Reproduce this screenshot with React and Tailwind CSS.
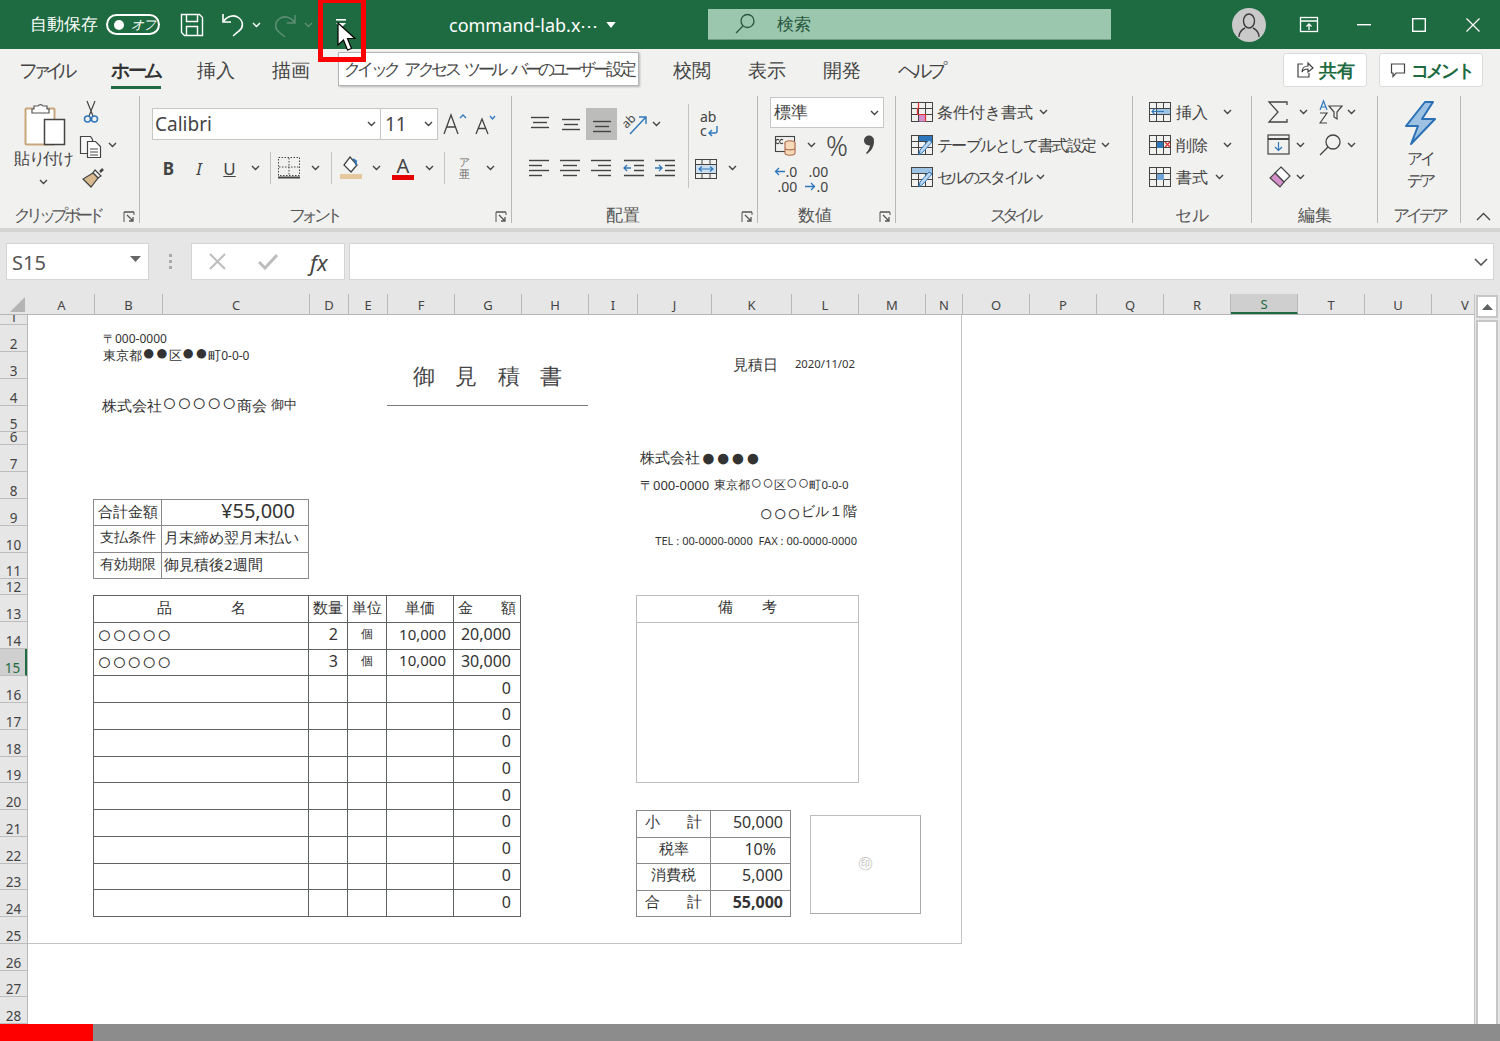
import React from "react";

const Chev = ({ c = "#444", w = 9 }) => (
  <svg width={w} height="6" viewBox="0 0 9 6" fill="none" stroke={c} strokeWidth="1.4"><path d="M1 1l3.5 3.5L8 1" /></svg>
);
const Launcher = () => (
  <svg width="12" height="12" viewBox="0 0 12 12" fill="none" stroke="#555" strokeWidth="1"><path d="M1 11V1h10v3M1 1h10" /><path d="M4 4l6 6M10 6v4H6" strokeWidth="1.3" /></svg>
);
const Lines = ({ rows }) => (
  <svg width="22" height="20" viewBox="0 0 22 20" stroke="#444" strokeWidth="1.4">
    {rows.map((r, i) => <path key={i} d={`M${r[1]} ${r[0]}.5H${r[2]}`} />)}
  </svg>
);
const CellIcon = ({ children }) => (
  <svg width="24" height="24" viewBox="0 0 24 24" fill="none">
    {children}
  </svg>
);
const GridLines = () => (
  <g stroke="#444" strokeWidth="1" fill="none">
    <rect x="1.5" y="2.5" width="21" height="19" />
    <path d="M1.5 8.5h21M1.5 14.5h21M8.5 2.5v19M15.5 2.5v19" />
  </g>
);
const ArrowL = () => (
  <svg className="mr-px" width="11" height="9" viewBox="0 0 11 9" fill="none" stroke="#2f77bc" strokeWidth="1.300"><path d="M11 4.500H1M5 1L1.500 4.500 5 8" /></svg>
);
const ArrowR = () => (
  <svg className="mr-px" width="11" height="9" viewBox="0 0 11 9" fill="none" stroke="#2f77bc" strokeWidth="1.300"><path d="M0 4.500h10M6 1l3.500 3.500L6 8" /></svg>
);

function Group({ w, label, track = "", launcher, children }) {
  return (
    <div className={`${w} h-[127px] shrink-0 flex flex-col relative border-r border-[#b9b9b7]`}>
      <div className="h-[108px]">{children}</div>
      <div className={`h-[19px] pt-[3px] flex items-center justify-center text-[16.5px] leading-none text-[#555] whitespace-nowrap ${launcher ? "pr-[24px]" : ""} ${track}`}>{label}</div>
      {launcher && <div className="absolute right-[4px] bottom-[0px] flex"><Launcher /></div>}
    </div>
  );
}

const columns = [
  ["A", "w-[66px]"], ["B", "w-[68px]"], ["C", "w-[147px]"], ["D", "w-[39px]"], ["E", "w-[39px]"], ["F", "w-[67px]"], ["G", "w-[67px]"], ["H", "w-[67px]"],
  ["I", "w-[49px]"], ["J", "w-[74px]"], ["K", "w-[80px]"], ["L", "w-[67px]"], ["M", "w-[67px]"], ["N", "w-[37px]"], ["O", "w-[67px]"], ["P", "w-[67px]"],
  ["Q", "w-[67px]"], ["R", "w-[67px]"], ["S", "w-[67px]"], ["T", "w-[67px]"], ["U", "w-[67px]"], ["V", "w-[67px]"],
];
const r27 = "h-[26.78px]";
const rowHeights = [
  "h-[10px]", "h-[27px]", "h-[26.5px]", "h-[27px]", "h-[26.5px]", "h-[13px]", "h-[27px]", "h-[27px]", "h-[26.5px]", "h-[27px]", "h-[26.5px]", "h-[16px]",
  "h-[27px]", "h-[27px]", "h-[27px]", "h-[27px]", r27, r27, r27, r27, r27, r27, r27, r27, r27, r27, r27, r27,
];

const Marks = ({ children, className = "" }) => (
  <span className={`font-['DejaVu_Sans',sans-serif] leading-[0] ${className}`}>{children}</span>
);

const itemRows = [
  ["○○○○○", "2", "個", "10,000", "20,000"],
  ["○○○○○", "3", "個", "10,000", "30,000"],
  ...Array.from({ length: 9 }, () => ["", "", "", "", "0"]),
];

const LC = "border-r border-b border-[#8a8a8a] flex items-center pb-[3px]";
const DC = "border-r border-b border-[#5f6360] flex items-center pb-[3px]";

export default function App() {
  return (
    <div lang="ja" className="w-[1500px] h-[1041px] relative overflow-hidden flex flex-col bg-[#e6e6e6] text-[#444] font-['Noto_Sans_CJK_JP',sans-serif]">
      {/* Title bar */}
      <div className="h-[49px] shrink-0 bg-[#1e6b41] flex items-center text-white">
        <span className="ml-[30px] w-[66px] text-[16.5px] leading-none whitespace-nowrap">自動保存</span>
        <div className="ml-[10px] w-[54px] h-[21px] rounded-full border-2 border-white flex items-center">
          <span className="ml-[6px] w-[10px] h-[10px] rounded-full bg-white" />
          <span className="ml-[7px] text-[13px] leading-none italic tracking-[-1px]">オフ</span>
        </div>
        <svg className="ml-[20px]" width="24" height="24" viewBox="0 0 24 24" fill="none" stroke="#fff" strokeWidth="1.4">
          <path d="M1.5 1.5h18l3 3v18h-18l-3-3z" /><path d="M6.5 1.5v7h11v-7M6.5 22.5v-9h11v9" />
        </svg>
        <svg className="ml-[17px]" width="24" height="26" viewBox="0 0 24 26" fill="none" stroke="#fff" strokeWidth="1.6">
          <path d="M2 2v8h8" /><path d="M2.5 9.5C6 4 13 2 18 6c5 4 4 10 0 13l-6 5" />
        </svg>
        <span className="ml-[7px] flex"><Chev c="#fff" /></span>
        <svg className="ml-[12px]" width="24" height="24" viewBox="0 0 24 24" fill="none" stroke="#5d8f74" strokeWidth="1.5">
          <path d="M22 2v8h-8" /><path d="M21.5 9.5C18 4 11 2 6 6 1 10 2 16 6 19l6 5" />
        </svg>
        <span className="ml-[7px] flex"><Chev c="#5d8f74" /></span>
        <svg className="ml-[22px] -mt-[2px]" width="12" height="9" viewBox="0 0 12 9" fill="#fff"><rect x="1" y="0" width="10" height="1.6" /><path d="M1 4h10L6 9z" /></svg>
        <span className="ml-[102px] w-[147px] text-[18px] leading-none whitespace-nowrap font-['Noto_Sans',sans-serif]">command-lab.x⋯</span>
        <svg className="ml-[10px]" width="10" height="6" viewBox="0 0 11 7" fill="#fff"><path d="M0 0h11L5.500 7z" /></svg>
        <div className="ml-[92px] w-[403px] h-[31px] bg-[#9ac7ae] border-b border-[#6f9d84] flex items-center text-[#28563d]">
          <svg className="ml-[26px]" width="22" height="22" viewBox="0 0 22 22" fill="none" stroke="#28563d" strokeWidth="1.3"><circle cx="13.5" cy="8" r="6.5" /><path d="M9 13l-7 7" /></svg>
          <span className="ml-[21px] text-[16.5px] leading-none">検索</span>
        </div>
        <div className="ml-[121px] w-[34px] h-[34px] rounded-full bg-[#c9c9c9] flex items-center justify-center">
          <svg width="24" height="26" viewBox="0 0 24 26" fill="none" stroke="#3c3c3c" strokeWidth="1.4"><ellipse cx="12" cy="9" rx="5.5" ry="7" /><path d="M2 25c0-6 4-8 6-9M22 25c0-6-4-8-6-9" /></svg>
        </div>
        <svg className="ml-[33px]" width="20" height="18" viewBox="0 0 20 18" fill="none" stroke="#fff" strokeWidth="1.3"><rect x="1.5" y="1.5" width="17" height="14" /><path d="M1.5 5h17M10 14V8M7.5 10.5L10 8l2.5 2.5" /></svg>
        <svg className="ml-[38px]" width="14" height="2" viewBox="0 0 14 2" fill="#fff"><rect width="14" height="1.4" /></svg>
        <svg className="ml-[41px]" width="14" height="14" viewBox="0 0 14 14" fill="none" stroke="#fff" strokeWidth="1.4"><rect x="0.7" y="0.7" width="12.6" height="12.6" /></svg>
        <svg className="ml-[40px]" width="14" height="14" viewBox="0 0 14 14" fill="none" stroke="#fff" strokeWidth="1.3"><path d="M0.5 0.5l13 13M13.5 0.5l-13 13" /></svg>
      </div>

      {/* Tabs */}
      <div className="h-[47px] shrink-0 bg-[#f1f1ef] flex items-start text-[18.5px] leading-none text-[#444]">
        <span className="ml-[19px] mt-[12px] w-[54px] whitespace-nowrap tracking-[-6px]">ファイル</span>
        <div className="ml-[38px] w-[50px] h-[40px] flex flex-col items-center pt-[12px] border-b-[3px] border-[#1e6b41] font-bold text-[#333]"><span className="whitespace-nowrap tracking-[-2.5px]">ホーム</span></div>
        <span className="ml-[36px] mt-[12px] w-[38px] whitespace-nowrap">挿入</span>
        <span className="ml-[37px] mt-[12px] w-[38px] whitespace-nowrap">描画</span>
        <span className="ml-[363px] mt-[12px] w-[38px] whitespace-nowrap">校閲</span>
        <span className="ml-[37px] mt-[12px] w-[38px] whitespace-nowrap">表示</span>
        <span className="ml-[37px] mt-[12px] w-[39px] whitespace-nowrap">開発</span>
        <span className="ml-[36px] mt-[12px] w-[47px] whitespace-nowrap tracking-[-4px]">ヘルプ</span>
        <div className="ml-[338px] mt-[4px] w-[84px] h-[34px] bg-white border border-[#dcdcdc] rounded-[3px] flex items-center justify-center gap-[5px] font-bold text-[#1e6b41] text-[18px]">
          <svg width="18" height="18" viewBox="0 0 18 18" fill="none" stroke="#444" strokeWidth="1.2"><path d="M7 3H2v13h11v-4M6 11c0-4 3-6 6-6V2l5 5-5 4V8c-3 0-5 1-6 3z" /></svg>
          共有
        </div>
        <div className="ml-[12px] mt-[4px] w-[104px] h-[34px] bg-white border border-[#dcdcdc] rounded-[3px] flex items-center justify-center gap-[5px] font-bold text-[#1e6b41] text-[18px] tracking-[-2.7px]">
          <svg width="16" height="16" viewBox="0 0 16 16" fill="none" stroke="#444" strokeWidth="1.2"><path d="M1.5 2h13v9H6l-3 3.500V11H1.500z" /></svg>
          コメント
        </div>
      </div>

      {/* Ribbon */}
      <div className="h-[136px] shrink-0 bg-[#f1f1ef] flex items-start border-b-[4px] border-[#d4d4d2]">
        <Group w="w-[140px]" label="クリップボード" track="tracking-[-4.6px]" launcher>
          <div className="flex h-full">
            <div className="w-[86px] flex flex-col items-center">
              <svg className="mt-[6px] ml-[4px]" width="42" height="44" viewBox="0 0 42 44" fill="none">
                <rect x="1.500" y="6.500" width="29" height="36" rx="1" fill="#fff" stroke="#c8a77f" strokeWidth="2" />
                <path d="M10 7V4h4a3 3 0 0 1 5 0h4v3h2v4H8V7z" fill="#fff" stroke="#555" strokeWidth="1.2" />
                <rect x="20.500" y="17.500" width="20" height="25" fill="#fff" stroke="#444" strokeWidth="1.500" />
              </svg>
              <span className="mt-[2px] text-[16px] leading-[20px] whitespace-nowrap tracking-[-1.5px]">貼り付け</span>
              <span className="mt-[11px] flex"><Chev /></span>
            </div>
            <div className="flex flex-col">
              <div className="h-[32.500px] flex items-center">
                <svg className="ml-[-3px]" width="16" height="24" viewBox="0 0 16 24" fill="none" stroke="#444" strokeWidth="1.200"><path d="M4 1l6 15M12 1L6 16" /><circle cx="4.500" cy="19" r="3" stroke="#2f77bc" strokeWidth="1.500" /><circle cx="11.500" cy="19" r="3" stroke="#2f77bc" strokeWidth="1.500" /></svg>
              </div>
              <div className="h-[32.500px] flex items-center">
                <svg className="ml-[-7px] mt-[4px]" width="24" height="24" viewBox="0 0 24 24" fill="#f8f8f8" stroke="#444" strokeWidth="1.200"><path d="M1.500 1.500h10l2 3v14h-12z" /><path d="M8.500 6.500h8l5 5v11h-13z" fill="#fff" /><path d="M11 14h8M11 17h8M11 20h8" strokeWidth="1" /></svg>
                <span className="ml-[5px] flex"><Chev /></span>
              </div>
              <div className="h-[32.500px] flex items-center">
                <svg className="ml-[-5px] mt-[2px]" width="24" height="24" viewBox="0 0 24 24" fill="none" stroke="#444" strokeWidth="1.200"><path d="M14 4l6 6-3 2-5-5z" /><path d="M12 7l5 5-7 9-8-8z" fill="#d9b98e" /><path d="M19 6l3-3" strokeWidth="2.500" /></svg>
              </div>
            </div>
          </div>
        </Group>

        <Group w="w-[372px]" label="フォント" track="tracking-[-4.5px]" launcher>
          <div className="pt-[12px]">
            <div className="flex items-center h-[32px] pl-[12px]">
              <div className="w-[229px] h-[32px] bg-white border border-[#c6c6c6] flex items-center justify-between pr-[4px]">
                <span className="pl-[2px] text-[19px] leading-none font-['Noto_Sans',sans-serif]">Calibri</span>
                <Chev />
              </div>
              <div className="w-[57px] h-[32px] bg-white border border-l-0 border-[#c6c6c6] flex items-center justify-between pr-[4px]">
                <span className="pl-[4px] text-[19px] leading-none font-['Noto_Sans',sans-serif]">11</span>
                <Chev />
              </div>
              <svg className="ml-[5px]" width="24" height="24" viewBox="0 0 24 24" fill="none" stroke="#444" strokeWidth="1.300"><path d="M1 22L8 3l7 19M3.500 15h9" /><path d="M17 6l3-3 3 3" stroke="#2f77bc" /></svg>
              <svg className="ml-[8px]" width="22" height="22" viewBox="0 0 22 22" fill="none" stroke="#444" strokeWidth="1.300"><path d="M1 21L7 6l6 15M3 15.500h8" /><path d="M15 3l2.500 3L20 3" stroke="#2f77bc" /></svg>
            </div>
            <div className="flex items-center h-[32px] mt-[12px] pl-[13px]">
              <span className="w-[31px] text-center text-[17px] leading-none font-bold font-['Liberation_Sans',sans-serif]">B</span>
              <span className="w-[30px] text-center text-[17px] leading-none italic font-['Liberation_Sans',sans-serif]">I</span>
              <span className="w-[31px] text-center text-[17px] leading-none underline font-['Liberation_Sans',sans-serif]">U</span>
              <span className="w-[20px] flex justify-center"><Chev /></span>
              <span className="ml-[5px] w-px h-[32px] bg-[#c4c4c2]" />
              <span className="ml-[2px] w-[32px] flex justify-center">
                <svg width="22" height="22" viewBox="0 0 22 22" fill="none" stroke="#444" strokeWidth="1" strokeDasharray="1.500 1.500"><rect x="0.500" y="0.500" width="21" height="18" /><path d="M11 1v18M1 10h20" /><path d="M0 20.500h22" strokeWidth="2" strokeDasharray="none" /></svg>
              </span>
              <span className="w-[20px] flex justify-center"><Chev /></span>
              <span className="ml-[6px] w-px h-[32px] bg-[#c4c4c2]" />
              <span className="ml-[3px] w-[32px] flex justify-center">
                <svg width="24" height="24" viewBox="0 0 24 24" fill="none" stroke="#444" strokeWidth="1.300"><path d="M11 1l7 8-6 7-7-7z" fill="#fff" /><path d="M14 3l3 2 0 4" stroke="#2f77bc" strokeWidth="1.800" /><rect x="1" y="18" width="22" height="5" fill="#e5c89c" stroke="none" /></svg>
              </span>
              <span className="w-[19px] flex justify-center"><Chev /></span>
              <span className="ml-px w-[32px] flex flex-col items-center">
                <span className="text-[20px] leading-[19px] font-['Liberation_Sans',sans-serif]">A</span>
                <span className="w-[22px] h-[5px] bg-[#e60000]" />
              </span>
              <span className="w-[20px] flex justify-center"><Chev /></span>
              <span className="ml-[5px] w-px h-[32px] bg-[#c4c4c2]" />
              <span className="ml-[3px] w-[32px] flex flex-col items-center text-[11px] leading-[12px] text-[#666]"><span>ア</span><span>亜</span></span>
              <span className="w-[20px] flex justify-center"><Chev /></span>
            </div>
          </div>
        </Group>

        <Group w="w-[246px]" label="配置" launcher>
          <div className="flex pt-[12px] pl-[12px]">
            <div className="w-[156px]">
              <div className="flex items-center h-[32px]">
                <span className="w-[31px] flex justify-center"><Lines rows={[[3, 2, 20], [8, 4, 18], [13, 2, 20]]} /></span>
                <span className="w-[31px] flex justify-center"><Lines rows={[[5, 2, 20], [10, 4, 18], [15, 2, 20]]} /></span>
                <span className="w-[31px] h-[32px] bg-[#bcbcba] flex items-center justify-center"><Lines rows={[[7, 2, 20], [12, 4, 18], [17, 2, 20]]} /></span>
                <span className="ml-[2px] w-[32px] flex justify-center">
                  <svg width="26" height="24" viewBox="0 0 26 24" fill="none" className="overflow-visible">
                    <text x="0" y="14" transform="rotate(-45 6 10)" fontSize="12" fill="#444" fontFamily="Noto Sans">ab</text>
                    <path d="M8 22L23 6M17 5h7v7" stroke="#2f77bc" strokeWidth="1.400" />
                  </svg>
                </span>
                <span className="w-[10px] flex justify-center"><Chev /></span>
              </div>
              <div className="flex items-center h-[32px] mt-[12px]">
                <span className="w-[31px] flex justify-center"><Lines rows={[[2, 1, 21], [7, 1, 14], [12, 1, 21], [17, 1, 14]]} /></span>
                <span className="w-[31px] flex justify-center"><Lines rows={[[2, 1, 21], [7, 4, 18], [12, 1, 21], [17, 4, 18]]} /></span>
                <span className="w-[31px] flex justify-center"><Lines rows={[[2, 1, 21], [7, 8, 21], [12, 1, 21], [17, 8, 21]]} /></span>
                <span className="ml-[2px] w-[31px] flex justify-center">
                  <svg width="22" height="20" viewBox="0 0 22 20" fill="none" stroke="#444" strokeWidth="1.300"><path d="M1 2.500h20M11 7.500h10M11 12.500h10M1 17.500h20" /><path d="M8 10H1M4 7l-3 3 3 3" stroke="#2f77bc" /></svg>
                </span>
                <span className="w-[31px] flex justify-center">
                  <svg width="22" height="20" viewBox="0 0 22 20" fill="none" stroke="#444" strokeWidth="1.300"><path d="M1 2.500h20M11 7.500h10M11 12.500h10M1 17.500h20" /><path d="M1 10h7M5 7l3 3-3 3" stroke="#2f77bc" /></svg>
                </span>
              </div>
            </div>
            <span className="ml-[8px] mt-[-4px] w-px h-[84px] bg-[#c4c4c2]" />
            <div className="ml-[5px] w-[52px]">
              <div className="h-[32px] flex items-center justify-start pl-[6px] relative">
                <div className="flex flex-col items-start text-[14px] leading-[14px] text-[#444] font-['Noto_Sans',sans-serif]">
                  <span>ab</span>
                  <span className="flex items-center">c<svg width="12" height="11" viewBox="0 0 12 11" fill="none" stroke="#2f77bc" strokeWidth="1.400"><path d="M10 0v5a2 2 0 0 1-2 2H2M5 4L2 7l3 3" /></svg></span>
                </div>
              </div>
              <div className="flex items-center h-[32px] mt-[12px]">
                <svg width="24" height="24" viewBox="0 0 24 24" fill="none"><rect x="1.500" y="3.500" width="21" height="19" stroke="#444" /><path d="M1.500 8.500h21M1.500 17.500h21M8 3.500v5M16 3.500v5M8 17.500v5M16 17.500v5" stroke="#444" /><rect x="2" y="9" width="20" height="8" fill="#cde0f1" /><path d="M5 13h14M8 10.500L5 13l3 2.500M16 10.500l3 2.500-3 2.500" stroke="#2f77bc" strokeWidth="1.200" /></svg>
                <span className="ml-[10px] flex"><Chev /></span>
              </div>
            </div>
          </div>
        </Group>

        <Group w="w-[138px]" label="数値" launcher>
          <div className="pl-[12px] pt-[1px]">
            <div className="w-[114px] h-[31px] bg-white border border-[#c6c6c6] flex items-center justify-between pr-[4px]">
              <span className="pl-[3px] text-[16.500px] leading-none">標準</span>
              <Chev />
            </div>
            <div className="flex items-center h-[34px]">
              <span className="w-[32px] flex justify-center">
                <svg width="24" height="22" viewBox="0 0 24 22" fill="none" stroke="#444" strokeWidth="1.100"><rect x="1.500" y="2.500" width="19" height="15" /><path d="M5 9a2 2 0 1 1 0-3M9 9a2 2 0 1 1 0-3" /><ellipse cx="16" cy="9" rx="5" ry="2.200" fill="#f6d9b8" stroke="#b06a4c" /><path d="M11 9v10c0 3 10 3 10 0V9M11 14c0 2.500 10 2.500 10 0" fill="#f6d9b8" stroke="#b06a4c" /></svg>
              </span>
              <span className="w-[18px] flex justify-center"><Chev /></span>
              <span className="w-[34px] text-center text-[27px] leading-none font-['Noto_Sans',sans-serif] font-light">%</span>
              <span className="w-[30px] flex justify-center">
                <svg width="12" height="20" viewBox="0 0 12 20" fill="#444"><circle cx="6" cy="5.500" r="5" /><path d="M11 6c0 6-3 10-7 13l-1-1c3-3 4-6 4-9z" /></svg>
              </span>
            </div>
            <div className="flex items-center h-[34px] text-[14px] leading-[15px] font-['Noto_Sans',sans-serif]">
              <span className="w-[31px] flex justify-center items-center">
                <span className="flex flex-col items-end"><span className="flex items-center"><ArrowL />.0</span><span>.00</span></span>
              </span>
              <span className="w-[31px] flex justify-center items-center">
                <span className="flex flex-col items-end"><span>.00</span><span className="flex items-center"><ArrowR />.0</span></span>
              </span>
            </div>
          </div>
        </Group>

        <Group w="w-[237px]" label="スタイル" track="tracking-[-5px]">
          <div className="pl-[14px] text-[16px] leading-none">
            <div className="h-[32.500px] flex items-center">
              <CellIcon><GridLines /><rect x="9" y="14.500" width="7" height="7" fill="#d58fca" /><path d="M8.500 2.500v6h-1v6h8v7" stroke="#e23030" strokeWidth="1.200" /></CellIcon>
              <span className="ml-[3px] whitespace-nowrap">条件付き書式</span>
              <span className="ml-[6px] flex"><Chev /></span>
            </div>
            <div className="h-[32.500px] flex items-center">
              <CellIcon><GridLines /><rect x="9" y="3" width="13" height="5" fill="#2f77bc" /><path d="M22 9L13 19l-4 3 1-5 9-10z" fill="#bcd6ee" stroke="#2f77bc" /></CellIcon>
              <span className="ml-[3px] whitespace-nowrap tracking-[-1.6px]">テーブルとして書式設定</span>
              <span className="ml-[6px] flex"><Chev /></span>
            </div>
            <div className="h-[32.500px] flex items-center">
              <CellIcon><GridLines /><rect x="2" y="3" width="20" height="5" fill="#9ec3e5" /><path d="M22 9L13 19l-4 3 1-5 9-10z" fill="#bcd6ee" stroke="#2f77bc" /></CellIcon>
              <span className="ml-[3px] whitespace-nowrap tracking-[-2.7px]">セルのスタイル</span>
              <span className="ml-[6px] flex"><Chev /></span>
            </div>
          </div>
        </Group>

        <Group w="w-[119px]" label="セル">
          <div className="pl-[15px] text-[16px] leading-none">
            <div className="h-[32.500px] flex items-center">
              <CellIcon><GridLines /><rect x="9" y="9" width="13" height="5" fill="#9ec3e5" /><path d="M16 11.500H4M7 8.500l-3 3 3 3" stroke="#2f77bc" strokeWidth="1.200" /></CellIcon>
              <span className="ml-[4px] w-[41px] whitespace-nowrap">挿入</span>
              <span className="ml-[6px] flex"><Chev /></span>
            </div>
            <div className="h-[32.500px] flex items-center">
              <CellIcon><GridLines /><rect x="9" y="9" width="6" height="6" fill="#2f77bc" /><path d="M17 9l5 5M22 9l-5 5" stroke="#e23030" strokeWidth="1.300" /></CellIcon>
              <span className="ml-[4px] w-[41px] whitespace-nowrap">削除</span>
              <span className="ml-[6px] flex"><Chev /></span>
            </div>
            <div className="h-[32.500px] flex items-center">
              <CellIcon><GridLines /><rect x="9" y="9" width="7" height="6" fill="#6ea5d8" /></CellIcon>
              <span className="ml-[4px] w-[33px] whitespace-nowrap">書式</span>
              <span className="ml-[6px] flex"><Chev /></span>
            </div>
          </div>
        </Group>

        <Group w="w-[126px]" label="編集">
          <div className="pl-[15px]">
            <div className="h-[32.500px] flex items-center">
              <svg width="22" height="24" viewBox="0 0 22 24" fill="none" stroke="#444" strokeWidth="1.300"><path d="M20 5V2H2l9 10-9 10h18v-3" /></svg>
              <span className="ml-[10px] w-[9px] flex"><Chev /></span>
              <svg className="ml-[11px]" width="26" height="26" viewBox="0 0 26 26" fill="none" strokeWidth="1.200"><path d="M1 11L4.500 2 8 11M2 8h5" stroke="#2f77bc" /><path d="M1 14h7l-7 10h7" stroke="#444" /><path d="M10 7h13l-5 6v7l-3-2v-5z" stroke="#444" /></svg>
              <span className="ml-[2px] flex"><Chev /></span>
            </div>
            <div className="h-[32.500px] flex items-center">
              <svg width="24" height="22" viewBox="0 0 24 22" fill="none" stroke="#444" strokeWidth="1.200"><rect x="1" y="1" width="21" height="19" /><path d="M1 5h21" strokeWidth="2" /><path d="M11.500 8v8M8 13l3.500 3.500L15 13" stroke="#2f77bc" /></svg>
              <span className="ml-[5px] flex"><Chev /></span>
              <svg className="ml-[13px]" width="24" height="24" viewBox="0 0 24 24" fill="none" stroke="#444" strokeWidth="1.300"><circle cx="15" cy="9" r="7" /><path d="M10 14l-8 8" /></svg>
              <span className="ml-[5px] flex"><Chev /></span>
            </div>
            <div className="h-[32.500px] flex items-center">
              <svg width="24" height="24" viewBox="0 0 24 24" fill="none" stroke="#444" strokeWidth="1.200"><path d="M14 2l9 9-6 6-9-9z" fill="#fff" /><path d="M8 8l9 9-4 5-10-9z" fill="#d58fca" /></svg>
              <span className="ml-[5px] flex"><Chev /></span>
            </div>
          </div>
        </Group>

        <Group w="w-[83px]" label="アイデア" track="tracking-[-4px]">
          <div className="flex flex-col items-center pl-[2px]">
            <svg className="mt-[5px]" width="34" height="44" viewBox="0 0 34 44"><path d="M22 1L3 25h12L8 43l24-25H19L30 1z" fill="#9cc1e3" stroke="#2b6fb5" strokeWidth="2" strokeLinejoin="round" /></svg>
            <span className="mt-[2px] text-[16px] leading-[22px] tracking-[-3px]">アイ</span>
            <span className="text-[16px] leading-[22px] tracking-[-2.500px]">デア</span>
          </div>
        </Group>
        <div className="ml-[15px] mt-[116px] flex"><svg width="15" height="9" viewBox="0 0 15 9" fill="none" stroke="#444" strokeWidth="1.300"><path d="M1 8l6.500-6.500L14 8" /></svg></div>
      </div>

      {/* Formula bar */}
      <div className="h-[62px] shrink-0 flex items-start pt-[11px]">
        <div className="ml-[6px] w-[143px] h-[37px] bg-white border border-[#d4d4d4] flex items-center justify-between pr-[7px]">
          <span className="pl-[5px] pt-[2px] text-[20px] leading-none font-['Noto_Sans',sans-serif] text-[#555]">S15</span>
          <svg className="mt-[-6px]" width="11" height="6" viewBox="0 0 11 6" fill="#666"><path d="M0 0h11L5.500 6z" /></svg>
        </div>
        <div className="w-[42px] h-[37px] flex flex-col items-center justify-center gap-[3px]">
          <span className="w-[3px] h-[3px] bg-[#aaa]" /><span className="w-[3px] h-[3px] bg-[#aaa]" /><span className="w-[3px] h-[3px] bg-[#aaa]" />
        </div>
        <div className="w-[154px] h-[37px] bg-white border border-[#d4d4d4] flex items-center">
          <svg className="ml-[17px]" width="17" height="17" viewBox="0 0 17 17" fill="none" stroke="#bdbdbd" strokeWidth="2"><path d="M1 1l15 15M16 1L1 16" /></svg>
          <svg className="ml-[32px]" width="20" height="16" viewBox="0 0 20 16" fill="none" stroke="#bdbdbd" strokeWidth="3"><path d="M1 8l6 6L19 1" /></svg>
          <span className="ml-[32px] text-[22px] leading-none italic text-[#444] font-['Liberation_Serif',serif]">fx</span>
        </div>
        <div className="ml-[4px] w-[1145px] h-[37px] bg-white border border-[#d4d4d4] flex items-center justify-end pr-[5px]">
          <svg width="14" height="8" viewBox="0 0 14 8" fill="none" stroke="#555" strokeWidth="1.600"><path d="M1 1l6 6 6-6" /></svg>
        </div>
      </div>

      {/* Sheet */}
      <div className="flex-1 min-h-0 flex">
        <div className="w-[1474px] flex flex-col overflow-hidden">
          <div className="h-[21px] shrink-0 flex border-b border-[#b5b5b5] font-['Noto_Sans',sans-serif] text-[13px] leading-none text-[#444]">
            <div className="w-[29px] shrink-0 flex items-end justify-end pr-[4px] pb-[2px]">
              <svg width="15" height="15" viewBox="0 0 15 15" fill="#b4b4b4"><path d="M15 0v15H0z" /></svg>
            </div>
            {columns.map(([l, w]) => (
              <div key={l} className={`${w} shrink-0 flex items-center justify-center pt-[2px] border-r border-[#b9b9b9] ${l === "S" ? "bg-[#cfcfcf] border-b-2 border-b-[#1e6b41] text-[#1e6b41]" : ""}`}>{l}</div>
            ))}
          </div>
          <div className="flex-1 min-h-0 flex">
            <div className="w-[28px] shrink-0 border-r border-[#b9b9b9] overflow-hidden font-['Noto_Sans',sans-serif] text-[13.500px] leading-[14px] text-[#444]">
              {rowHeights.map((h, i) => (
                <div key={i} className={`${h} flex items-end justify-center border-b border-[#bdbdbd] overflow-hidden ${i === 14 ? "bg-[#cfcfcf] border-r-2 border-r-[#1e6b41] text-[#1e6b41]" : ""}`}>
                  <span>{i + 1}</span>
                </div>
              ))}
            </div>
            <div className="flex-1 bg-white">
              <div className="w-[934px] h-[629px] border-r border-b border-[#c4c4c4] text-[#333] font-['Open_Sans','Noto_Sans_CJK_JP',sans-serif] grid grid-cols-[66px_68px_147px_39px_39px_67px_67px_67px_49px_74px_80px_67px_67px_37px] grid-rows-[10px_27px_26.500px_27px_26.500px_13px_27px_27px_26.500px_27px_26.500px_16px_27px_27px_27px_27px_repeat(9,26.780px)]">
                {/* address */}
                <div className="col-[2/6] row-[2/4] pl-[9px] pt-[5px] text-[12px] leading-[17px] whitespace-nowrap">
                  <div>〒000-0000</div>
                  <div><span className="text-[13px]">東京都<Marks className="text-[22px]">●●</Marks>区<Marks className="text-[22px]">●●</Marks>町</span>0-0-0</div>
                </div>
                <div className="col-[2/6] row-[4/6] pl-[8px] flex items-center text-[14.500px] leading-[20px] whitespace-nowrap">
                  <span>株式会社<Marks className="text-[24.700px]">○○○○○</Marks>商会</span><span className="ml-[4px] text-[12.500px]">御中</span>
                </div>
                {/* title */}
                <div className="col-[6/9] row-[3/5] border-b border-[#7a7a7a] flex justify-center pt-[8px] text-[22px] leading-[30px] tracking-[20.500px] pl-[20.500px] text-[#444]">御見積書</div>
                {/* date */}
                <div className="col-[11/13] row-[3] flex items-center justify-end pr-[3px] -mt-[2px] whitespace-nowrap">
                  <span className="text-[14.700px]">見積日</span>
                  <span className="ml-[17px] text-[11.300px]">2020/11/02</span>
                </div>
                {/* company */}
                <div className="col-[10/13] row-[7] pl-[3px] -mt-[3px] flex items-center text-[15px] leading-none whitespace-nowrap">株式会社<Marks className="ml-[1px] text-[24.500px]">●●●●</Marks></div>
                <div className="col-[10/13] row-[8] pl-[3px] -mt-[1px] flex items-center whitespace-nowrap text-[13px] leading-none">〒000-0000<span className="ml-[5px] text-[11.500px]">東京都<Marks className="text-[19.500px]">○○</Marks>区<Marks className="text-[19.500px]">○○</Marks>町0-0-0</span></div>
                <div className="col-[10/13] row-[9] pr-[1px] -mt-[1px] flex items-center justify-end text-[13.500px] leading-none whitespace-nowrap"><Marks className="text-[23px]">○○○</Marks>ビル１階</div>
                <div className="col-[10/13] row-[10] pr-[1px] flex items-center justify-end text-[11.100px] leading-none whitespace-nowrap pt-[3px]">TEL : 00-0000-0000&nbsp;&nbsp;FAX : 00-0000-0000</div>

                {/* summary table */}
                <div className="col-[2/4] row-[9/12] -ml-px border-l border-t border-[#8a8a8a] grid grid-cols-[68px_147px] grid-rows-3">
                  <div className={`${LC} justify-center text-[15px]`}>合計金額</div>
                  <div className={`${LC} justify-end pr-[13px] text-[20px] leading-none`}>¥55,000</div>
                  <div className={`${LC} justify-center text-[13.500px]`}>支払条件</div>
                  <div className={`${LC} pl-[2px] text-[15px] whitespace-nowrap`}>月末締め翌月末払い</div>
                  <div className={`${LC} justify-center text-[13.500px]`}>有効期限</div>
                  <div className={`${LC} pl-[2px] text-[15px] whitespace-nowrap`}>御見積後2週間</div>
                </div>

                {/* items table */}
                <div className="col-[2/8] row-[13/25] -ml-px w-[428px] border-l border-t border-[#5f6360] grid grid-cols-[215px_39px_39px_67px_67px] grid-rows-[repeat(12,1fr)]">
                  <div className={`${DC} justify-center gap-[59px] text-[15px] pl-[1px]`}><span>品</span><span>名</span></div>
                  <div className={`${DC} justify-center text-[15px]`}>数量</div>
                  <div className={`${DC} justify-center text-[15px]`}>単位</div>
                  <div className={`${DC} justify-center text-[15px]`}>単価</div>
                  <div className={`${DC} justify-between px-[4px] text-[15px]`}><span>金</span><span>額</span></div>
                  {itemRows.map((r, i) => (
                    <React.Fragment key={i}>
                      <div className={`${DC} pl-[3px] text-[14.600px] leading-none`}><Marks className="text-[24.700px]">{r[0]}</Marks></div>
                      <div className={`${DC} justify-end pr-[9px] text-[16px] leading-none`}>{r[1]}</div>
                      <div className={`${DC} justify-center text-[12px] leading-none`}>{r[2]}</div>
                      <div className={`${DC} justify-end pr-[7px] text-[15px] leading-none`}>{r[3]}</div>
                      <div className={`${DC} justify-end pr-[9px] text-[16px] leading-none`}>{r[4]}</div>
                    </React.Fragment>
                  ))}
                </div>

                {/* remarks */}
                <div className="col-[10/13] row-[13/20] -ml-px -mr-px border border-[#bdbdbd] flex flex-col">
                  <div className="h-[27px] shrink-0 pb-[5px] border-b border-[#bdbdbd] flex items-center justify-center gap-[29px] text-[14.500px] leading-none"><span>備</span><span>考</span></div>
                </div>

                {/* totals */}
                <div className="col-[10/12] row-[21/25] -ml-px border-l border-t border-[#8a8a8a] grid grid-cols-[74px_80px] grid-rows-4">
                  <div className={`${LC} justify-between px-[8px] text-[14.500px]`}><span>小</span><span>計</span></div>
                  <div className={`${LC} justify-end pr-[7px] text-[16px] leading-none`}>50,000</div>
                  <div className={`${LC} justify-center text-[14.500px]`}>税率</div>
                  <div className={`${LC} justify-end pr-[14px] text-[16px] leading-none`}>10%</div>
                  <div className={`${LC} justify-center text-[14.500px]`}>消費税</div>
                  <div className={`${LC} justify-end pr-[7px] text-[16px] leading-none`}>5,000</div>
                  <div className={`${LC} justify-between px-[8px] text-[14.500px]`}><span>合</span><span>計</span></div>
                  <div className={`${LC} justify-end pr-[7px] text-[16px] leading-none font-bold`}>55,000</div>
                </div>

                {/* stamp */}
                <div className="col-[12/14] row-[21/25] ml-[19px] mt-[5px] w-[111px] h-[99px] pb-[5px] border border-[#bdbdbd] border-r-[#aaa] border-b-[#aaa] flex items-center justify-center text-[15px] leading-none text-[#b5b5b5]">㊞</div>
              </div>
            </div>
          </div>
        </div>
        {/* Vertical scrollbar */}
        <div className="w-[26px] shrink-0 flex flex-col pl-[1px] pr-[2px] pt-[1px] border-l border-[#c4c4c4]">
          <div className="h-[23px] shrink-0 bg-white border-2 border-[#c6c6c6] flex items-center justify-center">
            <svg width="11" height="6" viewBox="0 0 11 6" fill="#5f6360"><path d="M5.500 0L11 6H0z" /></svg>
          </div>
          <div className="mt-[2px] flex-1 bg-white border-2 border-b-0 border-[#c6c6c6]" />
        </div>
      </div>

      {/* Bottom strip */}
      <div className="h-[17px] shrink-0 flex bg-[#8c8c8c]">
        <div className="w-[93px] bg-[#ff0000]" />
      </div>

      {/* Overlays: tooltip, red highlight, mouse cursor */}
      <div className="absolute left-[338px] top-[52px] w-[301px] h-[34px] bg-white border border-[#b4b4b4] shadow-[1px_1px_2px_rgba(0,0,0,0.25)] flex items-center justify-center text-[16.500px] leading-none tracking-[-3.4px] [word-spacing:5px] text-[#444] whitespace-nowrap">クイック アクセス ツール バーのユーザー設定</div>
      <div className="absolute left-[318px] top-0 w-[48px] h-[62px] border-[5px] border-t-[3px] border-[#ff0000]" />
      <svg className="absolute left-[336px] top-[22px]" width="22" height="30" viewBox="0 0 22 30">
        <path d="M2 1v22l5.500-5 4 10 4-1.500-4-10h7.500z" fill="#fff" stroke="#000" strokeWidth="1.200" />
      </svg>
    </div>
  );
}
